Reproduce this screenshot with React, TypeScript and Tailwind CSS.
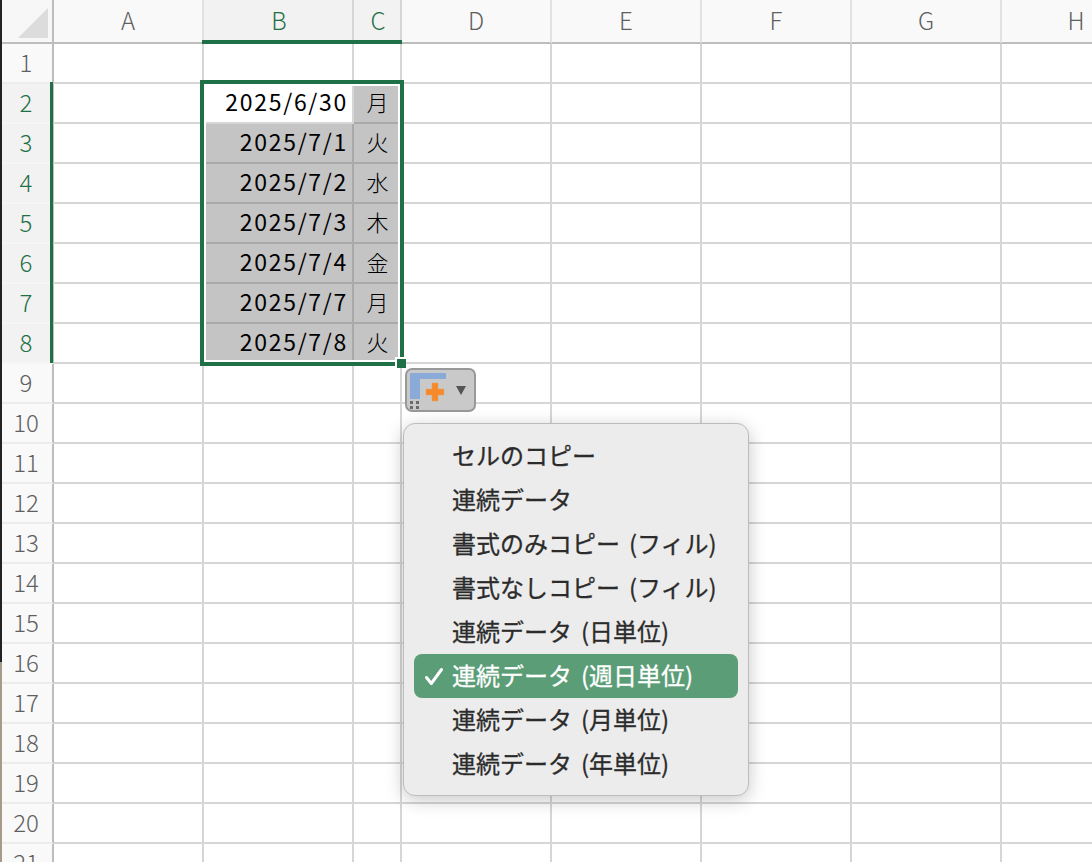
import React from 'react';

const jp = "font-['Noto_Sans_CJK_JP','Noto_Sans',sans-serif]";

const columns = [
    { label: 'A', w: 'w-[150px]' },
    { label: 'B', w: 'w-[150px]', active: true },
    { label: 'C', w: 'w-[48px]', active: true },
    { label: 'D', w: 'w-[150px]' },
    { label: 'E', w: 'w-[150px]' },
    { label: 'F', w: 'w-[150px]' },
    { label: 'G', w: 'w-[150px]' },
    { label: 'H', w: 'w-[150px]' },
];

const cells: Record<number, [string, string]> = {
    2: ['2025/6/30', '月'],
    3: ['2025/7/1', '火'],
    4: ['2025/7/2', '水'],
    5: ['2025/7/3', '木'],
    6: ['2025/7/4', '金'],
    7: ['2025/7/7', '月'],
    8: ['2025/7/8', '火'],
};

const menuItems = [
    'セルのコピー',
    '連続データ',
    '書式のみコピー (フィル)',
    '書式なしコピー (フィル)',
    '連続データ (日単位)',
    '連続データ (週日単位)',
    '連続データ (月単位)',
    '連続データ (年単位)',
];

const rows = Array.from({ length: 21 }, (_, i) => i + 1);

function HeaderRow() {
    return (
        <div className="flex h-[44px]">
            <div className="flex h-full w-[54px] shrink-0 items-end border-r-2 border-b-2 border-[#bdbdbd] bg-[#f7f7f7] pb-[4px] pl-[18px]">
                <svg width="30" height="30" viewBox="0 0 30 30">
                    <polygon points="30,0 30,30 0,30" fill="#dcdcdc" />
                </svg>
            </div>
            {columns.map((col) => (
                <div
                    key={col.label}
                    className={`flex h-full shrink-0 items-center justify-center pb-[2px] text-[24px] font-light ${col.w} ${
                        col.active
                            ? 'border-r-2 border-b-2 border-r-[#d6d6d6] border-b-[#1f7046] bg-[#f2f2f2] pl-[2px] text-[#1f7046]'
                            : 'border-r-2 border-b-2 border-r-[#e2e2e2] border-b-[#bdbdbd] bg-[#f9f9f9] text-[#5f5f5f]'
                    }`}
                >
                    {col.label}
                </div>
            ))}
        </div>
    );
}

function SheetRow({ row }: { row: number }) {
    const data = cells[row];
    return (
        <div className="flex h-[40px]">
            <div
                className={`flex h-full w-[54px] shrink-0 items-center justify-center border-r-2 border-[#bdbdbd] pb-[3px] text-[24px] font-light ${
                    data
                        ? 'border-b-2 border-b-[#f6f6f6] bg-[#f2f2f2] text-[#1f7046]'
                        : 'border-b-2 border-b-[#ececec] bg-[#f9f9f9] text-[#5f5f5f]'
                }`}
            >
                {row}
            </div>
            {columns.map((col) => {
                const isB = col.label === 'B';
                const isC = col.label === 'C';
                const shaded = data && (isC || (isB && row !== 2));
                return (
                    <div
                        key={col.label}
                        className={`flex h-full shrink-0 items-center border-r-2 border-b-2 pb-[3px] text-black ${col.w} ${
                            shaded ? 'border-[#a9a9a9] bg-[#c4c4c4]' : 'border-[#d6d6d6] bg-white'
                        } ${
                            isB
                                ? 'justify-end pr-[4px] text-[23px] tracking-[1.7px]'
                                : 'justify-center pl-[1px] text-[22px] font-light'
                        }`}
                    >
                        {data && isB ? data[0] : null}
                        {data && isC ? data[1] : null}
                    </div>
                );
            })}
        </div>
    );
}

function FillOptionsButton() {
    return (
        <div className="absolute top-[368px] left-[405px] h-[44px] w-[71px] rounded-[7px] border-2 border-[#999999] bg-[#c9c9c9]">
            <svg width="67" height="40" viewBox="0 0 67 40">
                <path d="M3 3h36v6H13v20H3z" fill="#8aaad8" />
                <path
                    d="M25 13h6v6h6v6h-6v6h-6v-6h-6v-6h6z"
                    fill="#f58a2c"
                    stroke="#e8a060"
                    strokeWidth="0.5"
                />
                <path
                    d="M3 31h3v3H3zM9 31h3v3H9zM3 36h3v3H3zM9 36h3v3H9z"
                    fill="#6a6a6a"
                />
                <path d="M49 16h10l-5 9z" fill="#555555" />
            </svg>
        </div>
    );
}

function FillMenu() {
    return (
        <div className="absolute top-[423px] left-[403px] flex w-[346px] flex-col rounded-[12px] border border-[#bcbcbc] bg-[#ececec] px-[10px] pt-[10px] pb-[9px] shadow-[0_4px_18px_rgba(0,0,0,0.22)]">
            {menuItems.map((item, i) => {
                const selected = i === 5;
                return (
                    <div
                        key={item}
                        className={`flex h-[44px] items-center rounded-[8px] pb-[2px] pl-[38px] text-[24px] [-webkit-text-stroke:0.3px_currentColor] [word-spacing:3.5px] ${
                            selected ? 'relative bg-[#5b9d77] text-white' : 'text-[#2b2b2b]'
                        }`}
                    >
                        {selected && (
                            <svg
                                className="absolute top-[13px] left-[10px]"
                                width="20"
                                height="19"
                                viewBox="0 0 20 19"
                            >
                                <path
                                    d="M2.5 10.5l4.8 6L17.5 2.5"
                                    fill="none"
                                    stroke="white"
                                    strokeWidth="3"
                                    strokeLinecap="round"
                                    strokeLinejoin="round"
                                />
                            </svg>
                        )}
                        {item}
                    </div>
                );
            })}
        </div>
    );
}

export default function App() {
    return (
        <div className={`relative h-[862px] w-[1092px] overflow-hidden bg-white ${jp}`}>
            <HeaderRow />
            {rows.map((row) => (
                <SheetRow key={row} row={row} />
            ))}

            {/* active header marks */}
            <div className="absolute top-[40px] left-[202px] h-[4px] w-[200px] bg-[#1f7046]" />
            <div className="absolute top-[82px] left-[50px] h-[281px] w-[3px] bg-[#1f7046]" />

            {/* selection */}
            <div className="absolute top-[80px] left-[200px] h-[286px] w-[204px] border-4 border-[#1f7046]">
                <div className="h-full w-full border-2 border-white" />
            </div>
            <div className="absolute top-[357px] left-[395px] h-[11px] w-[11px] border-t-2 border-l-2 border-white bg-[#1f7046]" />

            <FillOptionsButton />
            <FillMenu />

            {/* desktop showing past the window edge */}
            <div className="absolute top-0 left-0 flex h-full w-[2px] flex-col">
                <div className="h-[662px] bg-[#222222]" />
                <div className="flex-1 bg-[#a89a88]" />
            </div>
        </div>
    );
}
